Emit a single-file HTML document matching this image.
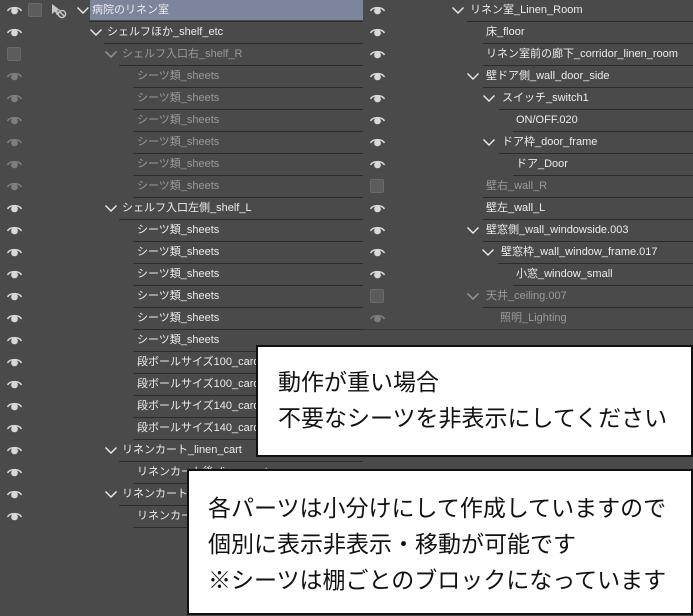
<!DOCTYPE html>
<html><head><meta charset="utf-8"><style>
body{margin:0;width:693px;height:616px;overflow:hidden;background:#4a4a4a;font-family:"Liberation Sans","Noto Sans CJK JP",sans-serif;position:relative}
svg{display:block}
.t{position:absolute;font-size:11px;line-height:20px;white-space:nowrap;color:#ececec}
.g{color:#9a9a9a}
.l{position:absolute;height:1px;background:#2b2b2b}
.e{position:absolute;width:15px;height:9px;line-height:0}
.b{position:absolute;width:12px;height:12px;background:#5c5c5c;border:1px solid #6a6a6a;border-radius:2px}
.c{position:absolute;width:12px;height:7px;line-height:0}
.box{position:absolute;background:#fff;border:2px solid #111;box-sizing:border-box;color:#111;font-size:23px;line-height:36px;white-space:nowrap}
</style></head><body>
<div style="position:absolute;left:90px;top:0;width:273px;height:20px;background:#7c859c"></div>
<div id="L"></div>
<div class="box" style="left:256px;top:345px;width:437px;height:112px;padding:17px 0 0 20px">動作が重い場合<br>不要なシーツを非表示にしてください</div>
<div class="box" style="left:187px;top:469px;width:506px;height:146px;padding:19px 0 0 19px;line-height:36px">各パーツは小分けにして作成していますので<br>個別に表示非表示・移動が可能です<br>※シーツは棚ごとのブロックになっています</div>
<script>
var eye='<svg viewBox="0 0 15 9" width="15" height="9"><path d="M0.5 5C3 0.5 12 0.5 14.5 5" fill="none" stroke="COL" stroke-width="1.5"/><ellipse cx="7.5" cy="5" rx="3.4" ry="3.3" fill="COL"/></svg>';
var chev='<svg viewBox="0 0 12 7" width="12" height="7"><path d="M0.5 0.5L6 6L11.5 0.5" fill="none" stroke="COL" stroke-width="1.4"/></svg>';
var L=[
['e',77,92,'病院のリネン室',0],
['e',90,107,'シェルフほか_shelf_etc',0],
['b',105,122,'シェルフ入口右_shelf_R',1],
['d',0,137,'シーツ類_sheets',1],['d',0,137,'シーツ類_sheets',1],['d',0,137,'シーツ類_sheets',1],['d',0,137,'シーツ類_sheets',1],['d',0,137,'シーツ類_sheets',1],['d',0,137,'シーツ類_sheets',1],
['e',105,122,'シェルフ入口左側_shelf_L',0],
['e',0,137,'シーツ類_sheets',0],['e',0,137,'シーツ類_sheets',0],['e',0,137,'シーツ類_sheets',0],['e',0,137,'シーツ類_sheets',0],['e',0,137,'シーツ類_sheets',0],['e',0,137,'シーツ類_sheets',0],
['e',0,137,'段ボールサイズ100_cardboard',0],['e',0,137,'段ボールサイズ100_cardboard',0],['e',0,137,'段ボールサイズ140_cardboard',0],['e',0,137,'段ボールサイズ140_cardboard',0],
['e',105,122,'リネンカート_linen_cart',0],
['e',0,137,'リネンカート後_linen_cart',0],
['e',105,122,'リネンカート_linen_cart2',0],
['e',0,137,'リネンカート',0]
];
var R=[
['e',452,470,'リネン室_Linen_Room',0],
['e',0,486,'床_floor',0],
['e',0,486,'リネン室前の廊下_corridor_linen_room',0],
['e',467,486,'壁ドア側_wall_door_side',0],
['e',483,502,'スイッチ_switch1',0],
['e',0,516,'ON/OFF.020',0],
['e',483,502,'ドア枠_door_frame',0],
['e',0,516,'ドア_Door',0],
['b',0,486,'壁右_wall_R',1],
['e',0,486,'壁左_wall_L',0],
['e',467,486,'壁窓側_wall_windowside.003',0],
['e',482,501,'壁窓枠_wall_window_frame.017',0],
['e',0,516,'小窓_window_small',0],
['b',467,486,'天井_ceiling.007',1],
['d',0,500,'照明_Lighting',1]
];
var h='';
function draw(a,px,end){a.forEach(function(r,i){var y=i*22;var col=r[4]?'#9a9a9a':'#ececec';
if(r[0]=='b')h+='<div class="b" style="left:'+(px+7)+'px;top:'+(y+3)+'px"></div>';
else{var ec=r[0]=='d'?'#7e7e7e':'#d8d8d8';h+='<div class="e" style="left:'+(px+7)+'px;top:'+(y+6)+'px">'+eye.replace(/COL/g,ec)+'</div>';}
if(r[1])h+='<div class="c" style="left:'+r[1]+'px;top:'+(y+7)+'px">'+chev.replace(/COL/g,col)+'</div>';
h+='<div class="t'+(r[4]?' g':'')+'" style="left:'+r[2]+'px;top:'+y+'px">'+r[3]+'</div>';
h+='<div class="l" style="left:'+(r[2]-3)+'px;top:'+(y+21)+'px;width:'+(end-r[2]+3)+'px"></div>';});}
draw(L,0,363);draw(R,363,693);
h+='<div class="l" style="left:363px;top:329px;width:330px;background:#3a3a3a"></div>';
h+='<svg style="position:absolute;left:51px;top:3px" width="16" height="16" viewBox="0 0 16 16"><path d="M1 1L1 11L4 8.5L6 12.5L8 11.5L6 7.5L9.5 7.5Z" fill="#c8c8c8"/><circle cx="11" cy="11" r="3.6" fill="none" stroke="#c8c8c8" stroke-width="1.4"/><path d="M8.5 8.5L13.5 13.5" stroke="#c8c8c8" stroke-width="1.4"/></svg>';
h+='<div class="b" style="left:28px;top:3px"></div>';
document.getElementById('L').innerHTML=h;
</script>
</body></html>
